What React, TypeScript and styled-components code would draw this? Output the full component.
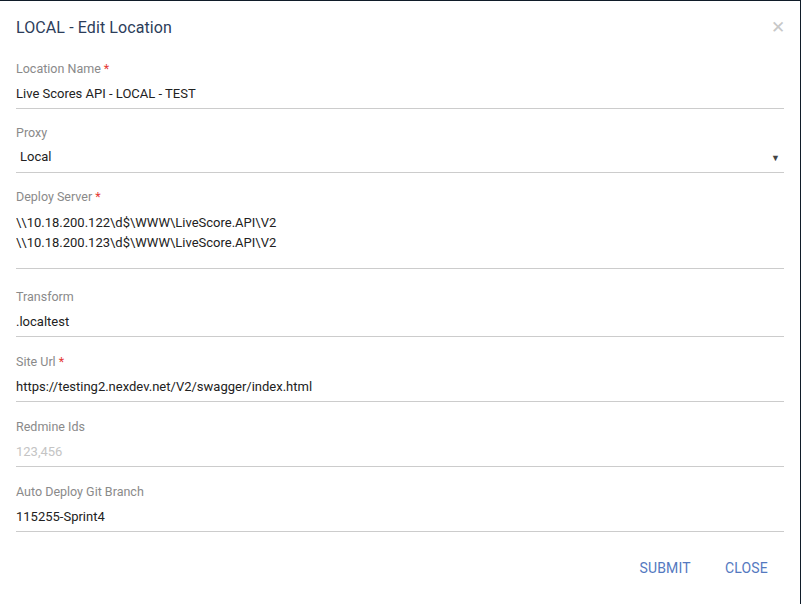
import React from "react";
import styled, { createGlobalStyle } from "styled-components";

const Global = createGlobalStyle`
  html, body { margin: 0; padding: 0; background: #101c29; }
  body { font-family: Roboto, "Noto Sans", Arial, sans-serif; }
  * { box-sizing: border-box; }
`;

const Dialog = styled.div`
  margin-top: 1px;
  width: 800px;
  height: 603px;
  background: #ffffff;
  display: flex;
  flex-direction: column;
  padding: 0 16px;
`;

const Header = styled.div`
  display: flex;
  align-items: center;
  justify-content: space-between;
  height: 52px;
`;

const Title = styled.h2`
  margin: 0;
  font-size: 16px;
  font-weight: 400;
  color: #2c3d5a;
  letter-spacing: 0.1px;
`;

const CloseX = styled.button`
  border: none;
  background: none;
  padding: 0;
  margin-right: -1px;
  color: #c8c8c8;
  font-size: 17px;
  line-height: 1;
  font-family: Arial, sans-serif;
  cursor: pointer;
`;

const Form = styled.div`
  display: flex;
  flex-direction: column;
  padding-top: 8px;
`;

const Field = styled.div<{ $gap?: number }>`
  display: flex;
  flex-direction: column;
  margin-top: ${(p) => p.$gap ?? 16}px;
`;

const Label = styled.label`
  font-size: 12.5px;
  line-height: 16px;
  color: #8a8a8a;
`;

const Req = styled.span`
  color: #e53935;
  margin-left: 3px;
`;

const TextInput = styled.input`
  width: 100%;
  border: none;
  border-bottom: 1px solid #cccccc;
  outline: none;
  background: transparent;
  padding: 7px 0 6px;
  font-family: inherit;
  font-size: 13px;
  line-height: 18px;
  height: 32px;
  color: #222;
  &::placeholder { color: #c4c4c4; }
`;

const TextArea = styled.textarea`
  width: 100%;
  border: none;
  border-bottom: 1px solid #cccccc;
  outline: none;
  background: transparent;
  resize: none;
  padding: 8px 0 0;
  height: 64px;
  font-family: inherit;
  font-size: 13px;
  line-height: 20px;
  color: #222;
  overflow: hidden;
`;

const SelectBox = styled.div`
  display: flex;
  align-items: center;
  justify-content: space-between;
  height: 32px;
  padding: 7px 0 6px 4px;
  border-bottom: 1px solid #cccccc;
  font-size: 13px;
  line-height: 18px;
  color: #222;
`;

const Caret = styled.span`
  font-size: 9px;
  color: #444;
  margin-right: 4px;
  margin-top: 2px;
`;

const Actions = styled.div`
  display: flex;
  justify-content: flex-end;
  gap: 2px;
  margin-top: 18px;
`;

const TextButton = styled.button`
  border: none;
  background: none;
  height: 36px;
  padding: 0 16px;
  font-family: inherit;
  font-size: 14px;
  letter-spacing: 0.2px;
  color: #5479bf;
  text-transform: uppercase;
  cursor: pointer;
`;

export default function App() {
  return (
    <>
      <Global />
      <Dialog>
        <Header>
          <Title>LOCAL - Edit Location</Title>
          <CloseX aria-label="close">✕</CloseX>
        </Header>
        <Form>
          <Field $gap={0}>
            <Label>Location Name<Req>*</Req></Label>
            <TextInput readOnly value="Live Scores API - LOCAL - TEST" />
          </Field>
          <Field>
            <Label>Proxy</Label>
            <SelectBox>
              <span>Local</span>
              <Caret>▼</Caret>
            </SelectBox>
          </Field>
          <Field>
            <Label>Deploy Server<Req>*</Req></Label>
            <TextArea
              readOnly
              value={"\\\\10.18.200.122\\d$\\WWW\\LiveScore.API\\V2\n\\\\10.18.200.123\\d$\\WWW\\LiveScore.API\\V2"}
            />
          </Field>
          <Field $gap={20}>
            <Label>Transform</Label>
            <TextInput readOnly value=".localtest" />
          </Field>
          <Field $gap={17}>
            <Label>Site Url<Req>*</Req></Label>
            <TextInput readOnly value="https://testing2.nexdev.net/V2/swagger/index.html" />
          </Field>
          <Field $gap={17}>
            <Label>Redmine Ids</Label>
            <TextInput readOnly placeholder="123,456" />
          </Field>
          <Field $gap={17}>
            <Label>Auto Deploy Git Branch</Label>
            <TextInput readOnly value="115255-Sprint4" />
          </Field>
        </Form>
        <Actions>
          <TextButton>Submit</TextButton>
          <TextButton>Close</TextButton>
        </Actions>
      </Dialog>
    </>
  );
}
